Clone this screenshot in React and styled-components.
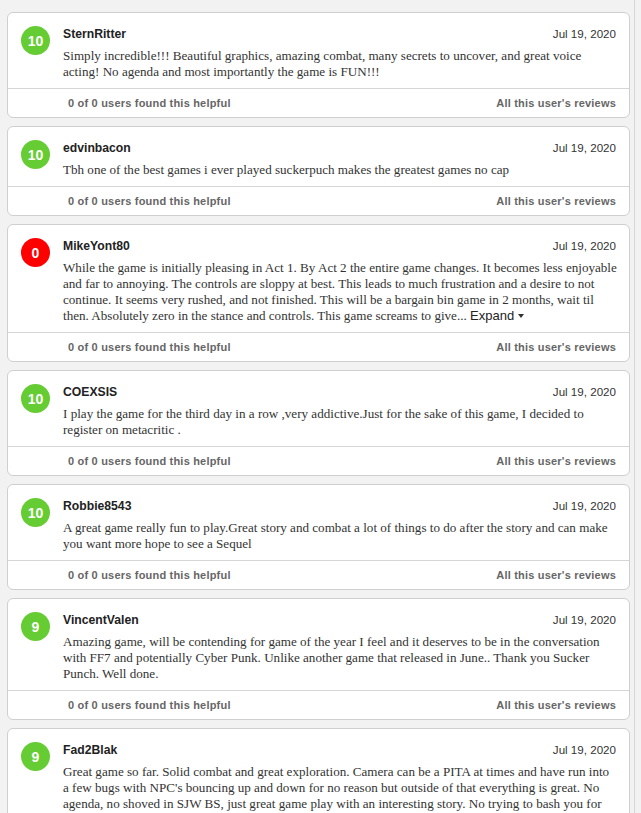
import React from 'react';
import styled, { createGlobalStyle } from 'styled-components';

const reviews = [
  {
    name: 'SternRitter',
    score: 10,
    date: 'Jul 19, 2020',
    text: 'Simply incredible!!! Beautiful graphics, amazing combat, many secrets to uncover, and great voice acting! No agenda and most importantly the game is FUN!!!',
  },
  {
    name: 'edvinbacon',
    score: 10,
    date: 'Jul 19, 2020',
    text: 'Tbh one of the best games i ever played suckerpuch makes the greatest games no cap',
  },
  {
    name: 'MikeYont80',
    score: 0,
    date: 'Jul 19, 2020',
    text: 'While the game is initially pleasing in Act 1. By Act 2 the entire game changes. It becomes less enjoyable and far to annoying. The controls are sloppy at best. This leads to much frustration and a desire to not continue. It seems very rushed, and not finished. This will be a bargain bin game in 2 months, wait til then. Absolutely zero in the stance and controls. This game screams to give...',
    expand: true,
  },
  {
    name: 'COEXSIS',
    score: 10,
    date: 'Jul 19, 2020',
    text: 'I play the game for the third day in a row ,very addictive.Just for the sake of this game, I decided to register on metacritic .',
  },
  {
    name: 'Robbie8543',
    score: 10,
    date: 'Jul 19, 2020',
    text: 'A great game really fun to play.Great story and combat a lot of things to do after the story and can make you want more hope to see a Sequel',
  },
  {
    name: 'VincentValen',
    score: 9,
    date: 'Jul 19, 2020',
    text: 'Amazing game, will be contending for game of the year I feel and it deserves to be in the conversation with FF7 and potentially Cyber Punk. Unlike another game that released in June.. Thank you Sucker Punch. Well done.',
  },
  {
    name: 'Fad2Blak',
    score: 9,
    date: 'Jul 19, 2020',
    text: "Great game so far. Solid combat and great exploration. Camera can be a PITA at times and have run into a\u00a0few bugs with NPC's bouncing up and down for no reason but outside of that everything is great. No agenda, no shoved in SJW BS, just great game play with an interesting story. No trying to bash you for who you are, just a good game...",
    expand: true,
  },
];

const GlobalStyle = createGlobalStyle`
  html, body {
    margin: 0;
    padding: 0;
    background: #f2f2f2;
  }
  body {
    font-family: "Liberation Sans", Arial, sans-serif;
  }
`;

const Page = styled.div`
  width: 634px;
  height: 813px;
  overflow: hidden;
  border-right: 1px solid #d6d6d6;
  background: #f2f2f2;
`;

const List = styled.div`
  display: flex;
  flex-direction: column;
  gap: 8px;
  padding: 12px 0 0 7px;
  width: 623px;
`;

const Card = styled.div`
  background: #fff;
  border: 1px solid #cfcfcf;
  border-radius: 6px;
`;

const Main = styled.div`
  display: flex;
  gap: 13px;
  padding: 13px 13px 8px 13px;
`;

const Badge = styled.div`
  flex: 0 0 29px;
  width: 29px;
  height: 29px;
  border-radius: 50%;
  background: ${p => (p.$score >= 8 ? '#66cc33' : p.$score >= 5 ? '#ffcc33' : '#ff0000')};
  color: #fff;
  font-weight: bold;
  font-size: 14px;
  display: flex;
  align-items: center;
  justify-content: center;
`;

const Content = styled.div`
  flex: 1;
  min-width: 0;
`;

const Head = styled.div`
  display: flex;
  justify-content: space-between;
  align-items: baseline;
  line-height: 15px;
`;

const Name = styled.span`
  font-size: 12.2px;
  font-weight: bold;
  color: #222;
`;

const DateText = styled.span`
  font-size: 11.6px;
  color: #333;
`;

const Body = styled.p`
  margin: 6px -3px 0 0;
  font-family: "Liberation Serif", Georgia, serif;
  font-size: 13.1px;
  line-height: 16px;
  color: #333;
`;

const Expand = styled.span`
  font-family: "Liberation Sans", Arial, sans-serif;
  font-size: 13px;
  color: #222;
  white-space: nowrap;
  &::after {
    content: '';
    display: inline-block;
    margin-left: 4px;
    vertical-align: 2px;
    border-left: 3px solid transparent;
    border-right: 3px solid transparent;
    border-top: 4px solid #333;
  }
`;

const Footer = styled.div`
  display: flex;
  justify-content: space-between;
  align-items: center;
  height: 28px;
  padding: 0 13px 0 60px;
  border-top: 1px solid #d6d6d6;
  font-size: 11px;
  font-weight: bold;
  letter-spacing: 0.2px;
  color: #666;
`;

const Review = ({ review }) => (
  <Card>
    <Main>
      <Badge $score={review.score}>{review.score}</Badge>
      <Content>
        <Head>
          <Name>{review.name}</Name>
          <DateText>{review.date}</DateText>
        </Head>
        <Body>
          {review.text}
          {review.expand && ' '}
          {review.expand && <Expand>Expand</Expand>}
        </Body>
      </Content>
    </Main>
    <Footer>
      <span>0 of 0 users found this helpful</span>
      <span>All this user's reviews</span>
    </Footer>
  </Card>
);

export default function App() {
  return (
    <>
      <GlobalStyle />
      <Page>
        <List>
          {reviews.map((r, i) => (
            <Review key={i} review={r} />
          ))}
        </List>
      </Page>
    </>
  );
}
